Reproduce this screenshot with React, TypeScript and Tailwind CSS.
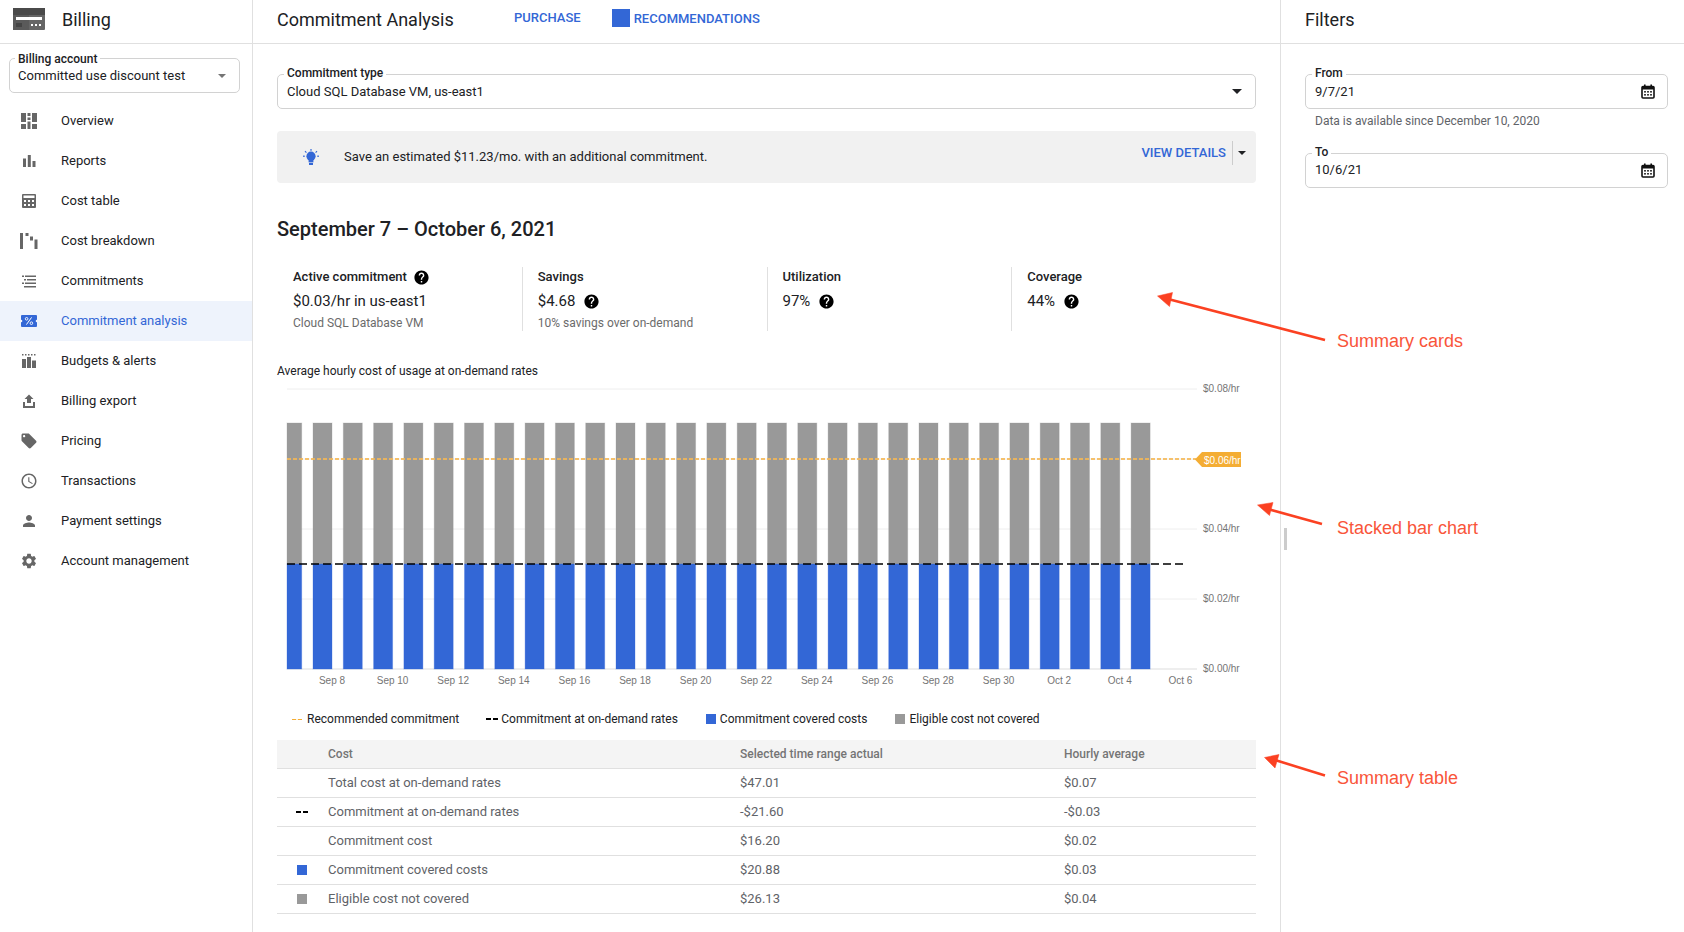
import { ReactNode } from "react";
import { MdHelp, MdLocalOffer, MdPerson, MdSchedule, MdSettings } from "react-icons/md";

const Overview = () => (
  <svg width="16" height="16" viewBox="0 0 16 16" fill="currentColor">
    <rect x="0" y="0" width="5" height="9" />
    <rect x="0" y="11" width="5" height="5" />
    <rect x="6.5" y="0" width="3" height="3" />
    <rect x="6.5" y="4.5" width="3" height="2.5" />
    <rect x="6.5" y="8.5" width="3" height="7.5" />
    <rect x="11" y="0" width="5" height="9" />
    <rect x="11" y="11" width="5" height="5" />
  </svg>
);

const Reports = () => (
  <svg width="16" height="16" viewBox="0 0 16 16" fill="currentColor">
    <rect x="2" y="5.5" width="3" height="8.5" />
    <rect x="6.8" y="2" width="3" height="12" />
    <rect x="11.5" y="8" width="3" height="6" />
  </svg>
);

const CostTable = () => (
  <svg width="16" height="16" viewBox="0 0 16 16">
    <rect x="1" y="1" width="14" height="14" rx="1" fill="currentColor" />
    <rect x="2.5" y="2.5" width="11" height="2.5" fill="#fff" />
    <g fill="#fff">
      <rect x="3" y="7" width="2" height="2" />
      <rect x="7" y="7" width="2" height="2" />
      <rect x="11" y="7" width="2" height="2" />
      <rect x="3" y="11" width="2" height="2" />
      <rect x="7" y="11" width="2" height="2" />
      <rect x="11" y="11" width="2" height="2" />
    </g>
  </svg>
);

const Breakdown = () => (
  <svg width="18" height="16" viewBox="0 0 18 16" fill="currentColor">
    <rect x="0" y="0" width="3" height="16" />
    <rect x="5.5" y="0" width="3" height="3" />
    <rect x="10" y="3.5" width="3" height="4" />
    <rect x="14.5" y="6.5" width="3" height="9.5" />
  </svg>
);

const Commitments = () => (
  <svg width="16" height="16" viewBox="0 0 16 16" fill="currentColor">
    <rect x="1" y="2.5" width="2" height="1.5" />
    <rect x="4" y="2.5" width="11" height="1.5" />
    <rect x="3" y="6" width="2" height="1.5" />
    <rect x="6" y="6" width="9" height="1.5" />
    <rect x="1" y="9.5" width="2" height="1.5" />
    <rect x="4" y="9.5" width="11" height="1.5" />
    <rect x="3" y="13" width="12" height="1.5" />
  </svg>
);

const Discount = () => (
  <svg width="16" height="12" viewBox="0 0 16 12">
    <rect width="16" height="12" rx="1" fill="currentColor" />
    <circle cx="0" cy="6" r="1.3" fill="#eef3fc" />
    <circle cx="16" cy="6" r="1.3" fill="#eef3fc" />
    <circle cx="5.6" cy="3.8" r="1.3" fill="none" stroke="#fff" strokeWidth="0.9" />
    <circle cx="10.4" cy="8.2" r="1.3" fill="none" stroke="#fff" strokeWidth="0.9" />
    <path d="M10.6 2.4 5.4 9.6" stroke="#fff" strokeWidth="1" />
  </svg>
);

const Budgets = () => (
  <svg width="16" height="16" viewBox="0 0 16 16" fill="currentColor">
    <rect x="1" y="1" width="1.5" height="1.5" />
    <rect x="4" y="1" width="1.5" height="1.5" />
    <rect x="7" y="1" width="1.5" height="1.5" />
    <rect x="10" y="1" width="1.5" height="1.5" />
    <rect x="13" y="1" width="1.5" height="1.5" />
    <rect x="1" y="6" width="4" height="9" />
    <rect x="6" y="4" width="4" height="11" />
    <rect x="11" y="7.5" width="4" height="7.5" />
  </svg>
);

const ExportIcon = () => (
  <svg width="16" height="16" viewBox="0 0 16 16" fill="currentColor">
    <path d="M8 1.5 12.5 6H10v4H6V6H3.5z" />
    <path d="M2 9h2v4h8V9h2v6H2z" />
  </svg>
);

const Bulb = () => (
  <svg width="16" height="16" viewBox="0 0 16 16" fill="#3367d6">
    <circle cx="8" cy="7.2" r="4.6" />
    <rect x="5.6" y="10" width="4.8" height="3.4" />
    <rect x="6" y="14" width="4" height="2" />
    <rect x="7.4" y="0" width="1.2" height="1.8" />
    <rect x="0" y="6.6" width="1.8" height="1.2" />
    <rect x="14.2" y="6.6" width="1.8" height="1.2" />
    <path d="m2.4 1.8 1.4 1.4-.8.8L1.6 2.6zM13.6 1.8l-1.4 1.4.8.8 1.4-1.4z" />
  </svg>
);

const Calendar = () => (
  <svg width="14" height="15" viewBox="0 0 14 15" className="-mr-[1px]">
    <rect x="1" y="2.5" width="12" height="11.5" rx="1" fill="none" stroke="#111" strokeWidth="1.6" />
    <rect x="1" y="2.5" width="12" height="3" fill="#111" />
    <rect x="3" y="0.5" width="1.6" height="3" fill="#111" />
    <rect x="9.4" y="0.5" width="1.6" height="3" fill="#111" />
    <g fill="#111">
      <rect x="3.2" y="7" width="1.6" height="1.6" />
      <rect x="6.2" y="7" width="1.6" height="1.6" />
      <rect x="9.2" y="7" width="1.6" height="1.6" />
      <rect x="3.2" y="10" width="1.6" height="1.6" />
      <rect x="6.2" y="10" width="1.6" height="1.6" />
      <rect x="9.2" y="10" width="1.6" height="1.6" />
    </g>
  </svg>
);

const Caret = ({ width = 10, color = "#202124" }: { width?: number; color?: string }) => (
  <svg width={width} height={width / 2} viewBox="0 0 10 5">
    <path d="M0 0h10L5 5z" fill={color} />
  </svg>
);

const Logo = () => (
  <svg width="32" height="22" viewBox="0 0 32 22">
    <rect width="32" height="22" rx="1" fill="#666" />
    <rect width="16" height="22" fill="#5a5a5a" />
    <rect y="0" width="32" height="7" fill="#4a4a4a" />
    <rect x="3" y="9" width="26" height="3" fill="#fff" />
    <rect x="3" y="15" width="6" height="4" fill="#444" />
    <rect x="18" y="16" width="2" height="2" fill="#fff" />
    <rect x="22" y="16" width="2" height="2" fill="#fff" />
    <rect x="26" y="16" width="2" height="2" fill="#fff" />
  </svg>
);

const navItems: { label: string; icon: ReactNode; active?: boolean }[] = [
  { label: "Overview", icon: <Overview /> },
  { label: "Reports", icon: <Reports /> },
  { label: "Cost table", icon: <CostTable /> },
  { label: "Cost breakdown", icon: <Breakdown /> },
  { label: "Commitments", icon: <Commitments /> },
  { label: "Commitment analysis", icon: <Discount />, active: true },
  { label: "Budgets & alerts", icon: <Budgets /> },
  { label: "Billing export", icon: <ExportIcon /> },
  { label: "Pricing", icon: <MdLocalOffer size={18} /> },
  { label: "Transactions", icon: <MdSchedule size={18} /> },
  { label: "Payment settings", icon: <MdPerson size={18} /> },
  { label: "Account management", icon: <MdSettings size={18} /> },
];

const Field = ({ label, labelPos = "left-[6px] top-[-9px]", children }: { label: string; labelPos?: string; children: ReactNode }) => (
  <div className="relative flex h-[35px] items-center justify-between rounded-[5px] border border-[#d2d2d2] pl-[9px] pr-[13px] text-[13px] text-[#202124]">
    <span className={`absolute bg-white px-[3px] text-[12px] font-medium leading-[15px] ${labelPos}`}>{label}</span>
    {children}
  </div>
);

const Stat = ({ label, value, help, sub }: { label: string; value: string; help?: boolean; sub?: string }) => (
  <div className="h-16 w-[245px] border-l border-[#e0e0e0] pl-[15px] first:border-l-0 first:pl-[16px]">
    <div className="mt-[1px] flex h-[18px] items-center gap-[6px] text-[13px] font-medium text-[#202124]">
      {label}
      {label === "Active commitment" && <MdHelp size={17} className="text-black" />}
    </div>
    <div className="mt-[6px] flex h-[18px] items-center gap-[8px] text-[15px] text-[#202124]">
      {value}
      {help && <MdHelp size={17} className="text-black" />}
    </div>
    {sub && <div className="mt-[5px] text-[12px] leading-[16px] text-[#6b6b6b]">{sub}</div>}
  </div>
);

const barX = Array.from({ length: 29 }, (_, i) => 313 + (i - 1) * 30.3);
const dateLabels = ["Sep 8", "Sep 10", "Sep 12", "Sep 14", "Sep 16", "Sep 18", "Sep 20", "Sep 22", "Sep 24", "Sep 26", "Sep 28", "Sep 30", "Oct 2", "Oct 4", "Oct 6"];
const axisFont = { fontFamily: '"Liberation Sans", sans-serif', fontSize: 10 };

const Chart = () => (
  <svg width="979" height="320" viewBox="277 379 979 320" className="block">
    {[389, 459, 529, 599].map((y) => (
      <line key={y} x1="287" x2="1197" y1={y} y2={y} stroke="#eeeeee" />
    ))}
    <line x1="287" x2="1197" y1="669" y2="669" stroke="#dddddd" />
    {barX.map((x, i) => {
      const left = Math.max(x, 287);
      const w = x + 19 - left;
      return (
        <g key={i}>
          <rect x={left} y="423" width={w} height="141" fill="#999999" stroke="#999999" strokeOpacity="0.3" />
          <rect x={left} y="564" width={w} height="105" fill="#3367d6" stroke="#3367d6" strokeOpacity="0.3" />
        </g>
      );
    })}
    <line x1="287" x2="1196" y1="459" y2="459" stroke="#f4b755" strokeOpacity="0.85" strokeWidth="2" strokeDasharray="4 2" />
    <line x1="287" x2="1185" y1="564" y2="564" stroke="#000" strokeWidth="1.5" strokeDasharray="8 4" />
    <path d="M1195 459.5 1202 452H1241V467H1202z" fill="#f4ad34" />
    <text x="1204" y="463.5" fill="#fff" style={axisFont}>$0.06/hr</text>
    {[["$0.08/hr", 392], ["$0.04/hr", 532], ["$0.02/hr", 602], ["$0.00/hr", 672]].map(([t, y]) => (
      <text key={t} x="1203" y={y} fill="#757575" style={axisFont}>{t}</text>
    ))}
    {dateLabels.map((t, i) => (
      <text key={t} x={332 + i * 60.6} y="684" fill="#757575" textAnchor="middle" style={axisFont}>{t}</text>
    ))}
  </svg>
);

const Swatch = ({ color }: { color: string }) => <span className="h-[10px] w-[10px]" style={{ background: color }} />;

const DashMark = ({ color, w, h }: { color: string; w: string; h: string }) => (
  <svg width={w} height={h} viewBox="0 0 12 2" preserveAspectRatio="none">
    <path d="M0 1h5M7 1h5" stroke={color} strokeWidth="2" />
  </svg>
);

const rows: { mark?: ReactNode; name: string; actual: string; hourly: string }[] = [
  { name: "Total cost at on-demand rates", actual: "$47.01", hourly: "$0.07" },
  { mark: <DashMark color="#000" w="12" h="2" />, name: "Commitment at on-demand rates", actual: "-$21.60", hourly: "-$0.03" },
  { name: "Commitment cost", actual: "$16.20", hourly: "$0.02" },
  { mark: <Swatch color="#3367d6" />, name: "Commitment covered costs", actual: "$20.88", hourly: "$0.03" },
  { mark: <Swatch color="#999999" />, name: "Eligible cost not covered", actual: "$26.13", hourly: "$0.04" },
];

const Annotations = () => (
  <svg width="1684" height="932" className="pointer-events-none absolute left-0 top-0">
    <g fill="#fb4122" stroke="#fb4122" strokeLinejoin="round">
      <line x1="1168" y1="299" x2="1325" y2="340" strokeWidth="2.6" />
      <path d="M1157.5 296 1172.5 292.5 1169.5 306.5z" strokeWidth="0.5" />
      <line x1="1268" y1="509" x2="1322" y2="524" strokeWidth="2.6" />
      <path d="M1257.5 505 1273 502.5 1269.5 515.5z" strokeWidth="0.5" />
      <line x1="1275" y1="760" x2="1325" y2="775.5" strokeWidth="2.6" />
      <path d="M1264.5 757.5 1279 754.5 1275 768z" strokeWidth="0.5" />
    </g>
  </svg>
);

const Note = ({ className, children }: { className: string; children: string }) => (
  <span className={`absolute text-[18px] leading-[22px] text-[#f9553a] font-['Liberation_Sans',sans-serif] ${className}`}>{children}</span>
);

export default function App() {
  return (
    <div className="relative flex h-[932px] w-[1684px] overflow-hidden bg-white font-['Roboto',sans-serif] text-[#202124]">
      <aside className="h-full w-[253px] shrink-0 border-r border-[#e0e0e0]">
        <div className="flex h-[44px] items-center gap-[17px] border-b border-[#e0e0e0] pb-[5px] pl-[13px] text-[18px]">
          <Logo />
          Billing
        </div>
        <div className="mx-[9px] mt-[14px] w-[231px] [&>div]:pl-[8px]">
          <Field label="Billing account" labelPos="left-[5px] top-[-7px]">
            <span>Committed use discount test</span>
            <Caret width={8} color="#757575" />
          </Field>
        </div>
        <nav className="mt-[8px]">
          {navItems.map((item) => (
            <div
              key={item.label}
              className={
                item.active
                  ? "flex h-10 items-center bg-[#eef3fc] text-[13px] text-[#3367d6]"
                  : "flex h-10 items-center text-[13px] text-[#202124]"
              }
            >
              <span className={item.active ? "flex w-[61px] justify-center pr-[3px] text-[#3367d6]" : "flex w-[61px] justify-center pr-[3px] text-[#666666]"}>
                {item.icon}
              </span>
              {item.label}
            </div>
          ))}
        </nav>
      </aside>

      <main className="h-full w-[1028px] shrink-0 border-r border-[#e0e0e0]">
        <div className="flex h-[44px] items-center border-b border-[#e0e0e0] pb-[5px] pl-[24px] text-[#3367d6]">
          <span className="w-[237px] text-[18px] text-[#202124]">Commitment Analysis</span>
          <span className="mb-[2px] text-[13px] font-medium">PURCHASE</span>
          <span className="mb-[2px] ml-[31px] h-[18px] w-[18px] bg-[#3367d6]" />
          <span className="ml-[4px] text-[13px] font-medium">RECOMMENDATIONS</span>
        </div>
        <div className="px-[24px] pt-[30px]">
          <Field label="Commitment type">
            <span>Cloud SQL Database VM, us-east1</span>
            <Caret />
          </Field>
          <div className="mt-[22px] flex h-[52px] items-center rounded-[4px] bg-[#f1f1f1] pl-[26px] pr-[10px] text-[13px]">
            <Bulb />
            <span className="ml-[25px]">Save an estimated $11.23/mo. with an additional commitment.</span>
            <span className="ml-auto mb-[8px] text-[13px] font-medium text-[#3367d6]">VIEW DETAILS</span>
            <span className="mb-[8px] ml-[6px] h-[24px] border-l border-[#cccccc]" />
            <span className="mb-[8px] ml-[5px]"><Caret width={8} /></span>
          </div>
          <h1 className="mt-[32px] text-[20px] font-medium leading-[28px]">September 7 – October 6, 2021</h1>
          <div className="mt-[24px] flex">
            <Stat label="Active commitment" value="$0.03/hr in us-east1" sub="Cloud SQL Database VM" />
            <Stat label="Savings" value="$4.68" help sub="10% savings over on-demand" />
            <Stat label="Utilization" value="97%" help />
            <Stat label="Coverage" value="44%" help />
          </div>
          <div className="mt-[32px] text-[12px] leading-[16px]">Average hourly cost of usage at on-demand rates</div>
          <Chart />
          <div className="flex h-[41px] items-center gap-[28px] pb-[1px] pl-[15px] text-[12px]">
            <span className="flex items-center gap-[5px]"><DashMark color="#f4ad34" w="10" h="1" />Recommended commitment</span>
            <span className="-ml-[1px] flex items-center gap-[3px]"><DashMark color="#000" w="12" h="2" />Commitment at on-demand rates</span>
            <span className="flex items-center gap-[4px]"><Swatch color="#3367d6" />Commitment covered costs</span>
            <span className="flex items-center gap-[4px]"><Swatch color="#999999" />Eligible cost not covered</span>
          </div>
          <div className="text-[13px] text-[#5f6368]">
            <div className="grid h-[29px] grid-cols-[51px_412px_324px_1fr] items-center border-b border-[#e0e0e0] bg-[#f4f4f4] text-[12px] font-medium text-[#757575]">
              <span />
              <span>Cost</span>
              <span>Selected time range actual</span>
              <span>Hourly average</span>
            </div>
            {rows.map((row) => (
              <div key={row.name} className="grid h-[29px] grid-cols-[51px_412px_324px_1fr] items-center border-b border-[#e0e0e0]">
                <span className="flex justify-center pr-[1px]">{row.mark}</span>
                <span>{row.name}</span>
                <span>{row.actual}</span>
                <span>{row.hourly}</span>
              </div>
            ))}
          </div>
        </div>
      </main>

      <section className="h-full flex-1">
        <div className="flex h-[44px] items-center border-b border-[#e0e0e0] pb-[5px] pl-[24px] text-[18px]">Filters</div>
        <div className="pl-[24px] pr-[16px] pt-[30px]">
          <Field label="From">
            <span>9/7/21</span>
            <Calendar />
          </Field>
          <div className="mt-[4px] pl-[10px] text-[12px] leading-[16px] text-[#5f6368]">Data is available since December 10, 2020</div>
          <div className="mt-[24px]">
            <Field label="To">
              <span className="mb-[2px]">10/6/21</span>
              <Calendar />
            </Field>
          </div>
        </div>
      </section>

      <span className="absolute left-[1284px] top-[528px] h-[22px] w-[3px] bg-[#cccccc]" />
      <Annotations />
      <Note className="left-[1337px] top-[330px]">Summary cards</Note>
      <Note className="left-[1337px] top-[517px]">Stacked bar chart</Note>
      <Note className="left-[1337px] top-[767px]">Summary table</Note>
    </div>
  );
}
